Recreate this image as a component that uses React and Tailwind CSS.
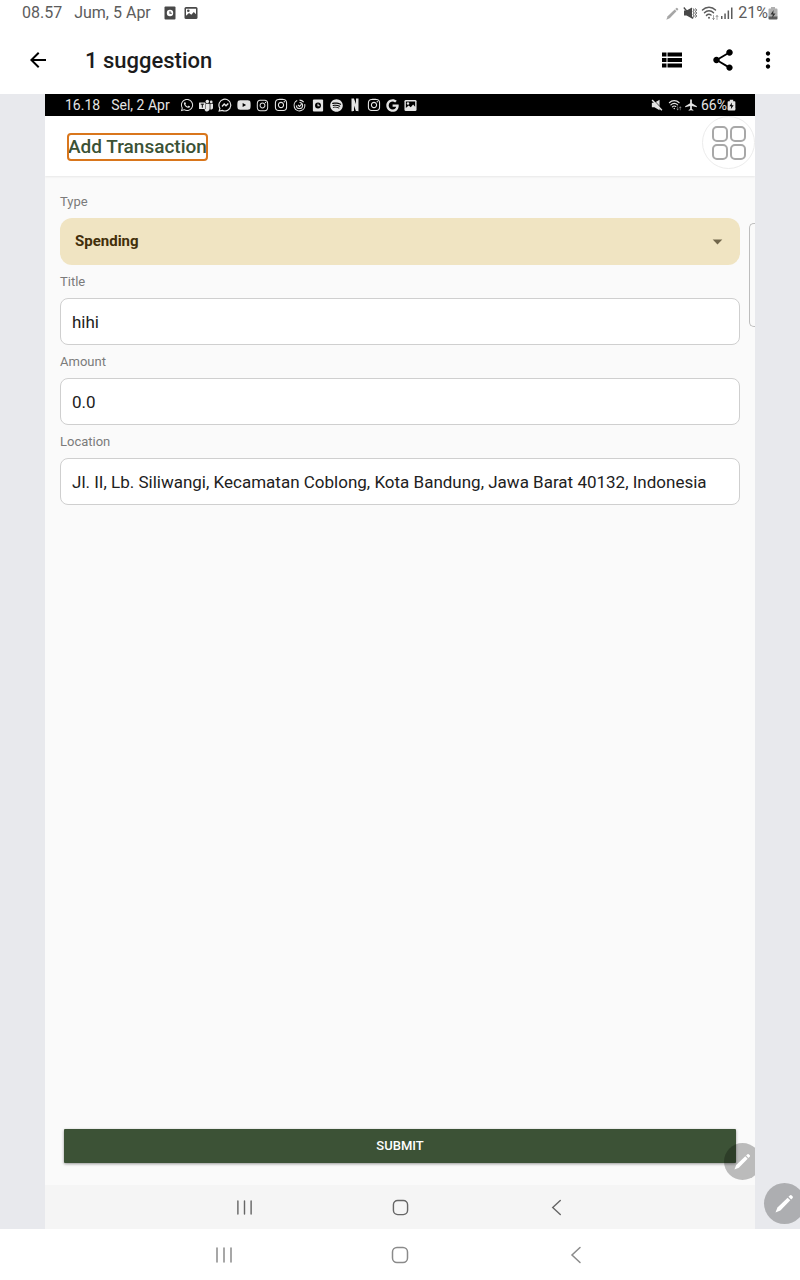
import { MdArrowBack, MdShare, MdMoreVert, MdAirplanemodeActive, MdArrowDropDown } from "react-icons/md";
import { FaWhatsapp, FaYoutube, FaInstagram, FaSpotify, FaGoogle } from "react-icons/fa";
import { RiNetflixFill } from "react-icons/ri";

function ClockCard({ className, hole }) {
  return (
    <svg viewBox="0 0 12 14" className={className} aria-hidden="true">
      <rect x="0.5" y="0.5" width="11" height="13" rx="1" fill="currentColor" />
      <circle cx="6" cy="7" r="3.2" fill={hole} />
      <path d="M6 5.2V7.2H7.8" stroke="currentColor" strokeWidth="1.1" fill="none" />
    </svg>
  );
}

function Picture({ className, hole }) {
  return (
    <svg viewBox="0 0 14 14" className={className} aria-hidden="true">
      <rect x="0.5" y="1" width="13" height="12" rx="1.5" fill="currentColor" />
      <path d="M2 2.800H12V8.300L9.800 6 7.300 8.800 5 7 2 9.800z" fill={hole} />
      <circle cx="4.300" cy="4.800" r="1.300" fill="currentColor" />
    </svg>
  );
}

function Teams({ className }) {
  return (
    <svg viewBox="0 0 16 14" className={className} aria-hidden="true">
      <circle cx="9.500" cy="2.300" r="2" fill="currentColor" />
      <circle cx="14" cy="2.900" r="1.500" fill="currentColor" />
      <path d="M8 5h4.200v5.500A3 3 0 0 1 6.500 12V11H8z" fill="currentColor" />
      <path d="M13 5h3v4.500a2.200 2.200 0 0 1-3 2z" fill="currentColor" />
      <rect x="0" y="3.500" width="7.500" height="7.500" rx="0.700" fill="currentColor" />
      <path d="M2 5.500h3.600M3.800 5.500v4" stroke="#000" strokeWidth="1.100" />
    </svg>
  );
}

function Wifi({ className }) {
  return (
    <svg viewBox="0 0 18 16" className={className} fill="none" stroke="currentColor" strokeWidth="1.500" strokeLinecap="round" aria-hidden="true">
      <path d="M1.500 5C5 1.300 11 1.300 14.500 5M3.500 7.800C6 5.200 10 5.200 12.500 7.800M5.500 10.400C7 9 8.500 9 10 10" />
      <circle cx="8" cy="12.800" r="1" fill="currentColor" stroke="none" />
      <path d="M12.500 10.500v4M11.500 13.300l1 1.200 1-1.200M16 14.500v-4M15 11.700l1-1.200 1 1.200" strokeWidth="0.900" opacity="0.600" />
    </svg>
  );
}

function Battery({ className, bolt, top }) {
  return (
    <svg viewBox="0 0 10 14" className={className} aria-hidden="true">
      <path d="M3 1h4v1.600h1.600q.9 0 .9.9V11h-9V3.500q0-.9.9-.9H3z" fill={top} />
      <path d="M.5 10.500h9v2.100q0 .9-.9.9H1.400q-.9 0-.9-.9z" fill="currentColor" />
      <path d="M5.600 4 2.500 8.600h2.200L4.200 12l3.300-4.600H5.200z" fill={bolt} />
    </svg>
  );
}

function VibrateMute({ className }) {
  return (
    <svg viewBox="0 0 14 14" className={className} aria-hidden="true">
      <path d="M1 4.500h2.500L9 1.500v11L3.500 9.500H1z" fill="currentColor" />
      <path d="M.8 1.500 10 12.500" stroke="currentColor" strokeWidth="1.300" />
      <path d="M10.200 2.500l1 1.500-1 1.500 1 1.500-1 1.500 1 1.500-1 1.500M12.500 2.500l1 1.500-1 1.500 1 1.500-1 1.500 1 1.500-1 1.500" stroke="currentColor" strokeWidth="1" fill="none" />
    </svg>
  );
}

function Mute({ className }) {
  return (
    <svg viewBox="0 0 14 14" className={className} aria-hidden="true">
      <path d="M1 4.300h3L10 .8v12.400L4 9.700H1z" fill="currentColor" />
      <path d="M2.700 1 13.500 12" stroke="#000" strokeWidth="1" />
      <path d="M1.300 1.200 12.700 13" stroke="currentColor" strokeWidth="1.700" />
    </svg>
  );
}

function Signal({ className }) {
  return (
    <svg viewBox="0 0 12 12" className={className} fill="currentColor" aria-hidden="true">
      <rect x="0" y="9" width="1.500" height="3" />
      <rect x="3.300" y="6.500" width="1.500" height="5.500" />
      <rect x="6.600" y="3.500" width="1.500" height="8.500" />
      <rect x="10" y="0.500" width="1.500" height="11.500" />
    </svg>
  );
}

function Pen({ className }) {
  return (
    <svg viewBox="0 0 20 20" className={className} fill="currentColor" aria-hidden="true">
      <path d="M.5 19.500 2.600 14.200 13.300 3.900 16.100 6.700 5.700 17.300z" />
      <path d="M14.200 3 15.900 1.400q.7-.6 1.400 0l1.300 1.300q.6.700 0 1.400L17 5.800z" />
    </svg>
  );
}

function Messenger({ className }) {
  return (
    <svg viewBox="0 0 14 14" className={className} fill="none" stroke="currentColor" strokeWidth="1.200" aria-hidden="true">
      <path d="M1.200 13 1.900 10.300A5.900 5.900 0 1 1 4.300 12.400z" />
      <path d="M4 8.500 6.200 6 8 7.800 10.300 5.500" strokeWidth="1.400" />
    </svg>
  );
}

function Swirl({ className }) {
  return (
    <svg viewBox="0 0 14 14" className={className} fill="none" stroke="currentColor" strokeWidth="1.200" aria-hidden="true">
      <path d="M4.500 1.700A5.800 5.800 0 1 0 12.600 5.500M7 1.200A5.800 5.800 0 0 1 11.500 3.300" />
      <path d="M7 3.700A3.300 3.300 0 1 1 3.700 7" />
      <path d="M5.300 6.300 7 8l2.300-2.500" />
    </svg>
  );
}

function ListIcon({ className }) {
  return (
    <svg viewBox="0 0 20 16" className={className} fill="currentColor" aria-hidden="true">
      <path d="M0 .5h4.500v4H0zM5.500 .5H20v4H5.500zM0 6h4.500v4H0zM5.500 6H20v4H5.500zM0 11.500h4.500v4H0zM5.500 11.500H20v4H5.500z" />
    </svg>
  );
}

function NavBar({ className, cell, icon }) {
  return (
    <nav className={className} aria-label="System navigation">
      <button type="button" aria-label="Recent apps" className={cell}>
        <svg viewBox="0 0 18 18" className={icon} fill="none" stroke="currentColor" strokeWidth="1.500" strokeLinecap="round">
          <path d="M2 2v14M9 2v14M16 2v14" />
        </svg>
      </button>
      <button type="button" aria-label="Home" className={cell}>
        <svg viewBox="0 0 18 18" className={icon} fill="none" stroke="currentColor" strokeWidth="1.500">
          <rect x="1.500" y="1.500" width="15" height="15" rx="4.500" />
        </svg>
      </button>
      <button type="button" aria-label="Back" className={cell}>
        <svg viewBox="0 0 18 18" className={icon} fill="none" stroke="currentColor" strokeWidth="1.500" strokeLinecap="round">
          <path d="M13 1.500 5 9l8 7.500" />
        </svg>
      </button>
    </nav>
  );
}

function TextField({ id, label, value }) {
  return (
    <div>
      <label htmlFor={id} className="flex h-[33px] items-center text-[13px] text-[#7b7b7b]">{label}</label>
      <input
        id={id}
        type="text"
        defaultValue={value}
        className="block h-[47px] w-full rounded-lg border border-[#cfcfcf] bg-white px-[11px] text-[17px] text-[#212121] outline-none"
      />
    </div>
  );
}

export default function App() {
  return (
    <div className="relative flex min-h-screen flex-col overflow-hidden bg-white font-['Roboto',sans-serif]">
      <div className="flex h-[26px] items-center px-[22px] text-[16px] text-[#5c5c5c]">
        <span>08.57</span>
        <span className="ml-3">Jum, 5 Apr</span>
        <ClockCard className="ml-[13px] h-[14px] w-3 text-[#484848]" hole="#fff" />
        <Picture className="ml-2 size-[14px] text-[#484848]" hole="#fff" />
        <div className="ml-auto flex items-center">
          <Pen className="size-[13px] text-[#a6a6a6]" />
          <VibrateMute className="ml-1 size-[14px] text-[#484848]" />
          <Wifi className="ml-1 h-4 w-[18px]" />
          <Signal className="ml-[2px] size-3" />
          <span className="ml-[5px]">21%</span>
          <Battery className="h-[14px] w-[10px] text-[#5c5c5c]" bolt="#333" top="#b0b0b0" />
        </div>
      </div>

      <header className="flex h-[68px] items-center pr-[19px] pl-[26px] text-black">
        <button type="button" aria-label="Back"><MdArrowBack className="size-[24px]" /></button>
        <h1 className="ml-[35px] pt-[2px] text-[22px] leading-8 font-medium text-[#1c1c1c]">1 suggestion</h1>
        <div className="ml-auto flex items-center">
          <button type="button" aria-label="List view"><ListIcon className="h-4 w-5" /></button>
          <button type="button" aria-label="Share" className="ml-7"><MdShare className="size-[26px]" /></button>
          <button type="button" aria-label="More options" className="ml-[19px]"><MdMoreVert className="size-[26px]" /></button>
        </div>
      </header>

      <main className="flex flex-1 flex-col bg-[#e8e9ed] px-[45px]">
        <div className="relative flex flex-1 flex-col overflow-hidden bg-[#fafafa]">
          <div className="flex h-[22px] items-center bg-black pr-[19px] pl-5 text-[14px] text-[#e4e4e4]">
            <span>16.18</span>
            <span className="ml-[11px]">Sel, 2 Apr</span>
            <div className="ml-[10px] flex items-center gap-[5px]">
              <FaWhatsapp className="size-[14px]" />
              <Teams className="h-[13px] w-[14px]" />
              <Messenger className="size-[14px]" />
              <FaYoutube className="size-[14px]" />
              <FaInstagram className="size-[13px]" />
              <FaInstagram className="size-[14px]" />
              <Swirl className="size-[13px]" />
              <ClockCard className="h-[13px] w-[14px]" hole="#000" />
              <FaSpotify className="size-[13px]" />
              <RiNetflixFill className="size-[14px]" />
              <FaInstagram className="size-[14px]" />
              <FaGoogle className="size-[13px]" />
              <Picture className="size-[13px]" hole="#000" />
            </div>
            <div className="ml-auto flex items-center">
              <Mute className="size-3" />
              <Wifi className="ml-[5px] h-3 w-[14px]" />
              <MdAirplanemodeActive className="ml-[2px] size-[14px]" />
              <span className="ml-[3px]">66%</span>
              <Battery className="h-3 w-[9px]" bolt="#000" top="#e4e4e4" />
            </div>
          </div>

          <div className="flex h-[60px] items-center bg-white px-[23px] pt-[2px] shadow-[0_1px_2px_rgba(0,0,0,0.08)]">
            <h2 className="rounded-[3px] text-[19px] leading-[26px] font-medium text-[#3b5235] outline-2 -outline-offset-1 outline-[#d9761c]">Add Transaction</h2>
          </div>

          <form className="flex flex-1 flex-col" onSubmit={(e) => e.preventDefault()}>
            <div className="flex-1 px-[15px] pt-[9px]">
              <div>
                <label htmlFor="type" className="flex h-[33px] items-center text-[13px] text-[#7b7b7b]">Type</label>
                <div className="relative">
                  <select id="type" className="block h-[47px] w-full appearance-none rounded-xl bg-[#f0e4c2] px-[15px] text-[15px] font-bold text-[#422f0a] outline-none">
                    <option>Spending</option>
                  </select>
                  <MdArrowDropDown className="pointer-events-none absolute top-3 right-[11px] size-[23px] text-[#71664b]" />
                </div>
              </div>
              <TextField id="title" label="Title" value="hihi" />
              <TextField id="amount" label="Amount" value="0.0" />
              <TextField id="location" label="Location" value="Jl. II, Lb. Siliwangi, Kecamatan Coblong, Kota Bandung, Jawa Barat 40132, Indonesia" />
            </div>
            <div className="px-[19px] pb-[22px]">
              <button type="submit" className="block h-[34px] w-full rounded-[1px] bg-[#3c5236] text-[13px] font-medium text-white shadow-[0_1px_3px_rgba(0,0,0,0.4)]">
                SUBMIT
              </button>
            </div>
          </form>

          <NavBar
            className="flex h-[44px] items-center justify-center gap-[138px] bg-[#f5f5f5] text-[#666]"
            cell="flex size-[18px] items-center justify-center"
            icon="size-[17px]"
          />

          <button type="button" aria-label="Apps" className="absolute top-[22px] right-0 grid size-[53px] grid-cols-[16px_16px] place-content-center gap-[2px] rounded-full border border-[#ececec] bg-white">
            <span className="size-4 rounded-[5px] border-[2px] border-[#a8a8a8]" />
            <span className="size-4 rounded-[5px] border-[2px] border-[#a8a8a8]" />
            <span className="size-4 rounded-[5px] border-[2px] border-[#a8a8a8]" />
            <span className="size-4 rounded-[5px] border-[2px] border-[#a8a8a8]" />
          </button>
          <div className="absolute top-[129px] right-0 h-[104px] w-[6px] rounded-l-[5px] border border-r-0 border-[#bdbdbd] bg-[#fafafa]" />
          <button type="button" aria-label="Edit screenshot" className="absolute -right-[6px] bottom-[49px] flex size-[37px] items-center justify-center rounded-full bg-black/25 text-white">
            <Pen className="size-[17px]" />
          </button>
        </div>
      </main>

      <NavBar
        className="flex h-[51px] items-center justify-center gap-[158px] text-[#8a8a8a]"
        cell="flex size-[18px] items-center justify-center"
        icon="size-[18px]"
      />

      <button type="button" aria-label="Edit" className="absolute -right-[5px] bottom-[56px] flex size-[41px] items-center justify-center rounded-full bg-[#adaeb1] text-white">
        <Pen className="size-[19px]" />
      </button>
    </div>
  );
}
